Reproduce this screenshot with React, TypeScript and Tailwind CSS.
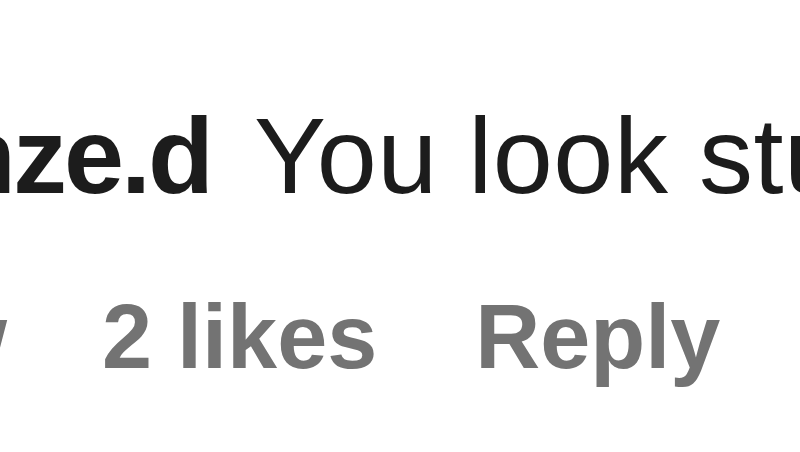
import React from 'react';

const App: React.FC = () => {
  return (
    <div className="w-[800px] h-[452px] bg-white overflow-hidden font-['Liberation_Sans',Arial,sans-serif]">
      <div className="pt-[102px] flex flex-col">
        <p className="whitespace-nowrap text-[108px] leading-[108px] text-[#1c1c1c] ml-[-50px]">
          <span className="font-bold tracking-[-3px]">nze.d</span>
          <span className="ml-[43px] tracking-[0.5px]">You look stunning</span>
        </p>
        <div className="mt-[82px] flex items-baseline whitespace-nowrap text-[90px] leading-[90px] font-bold text-[#737373] ml-[-63px]">
          <span>w</span>
          <span className="ml-[95px]">2 likes</span>
          <span className="ml-[98px]">Reply</span>
        </div>
      </div>
    </div>
  );
};

export default App;
